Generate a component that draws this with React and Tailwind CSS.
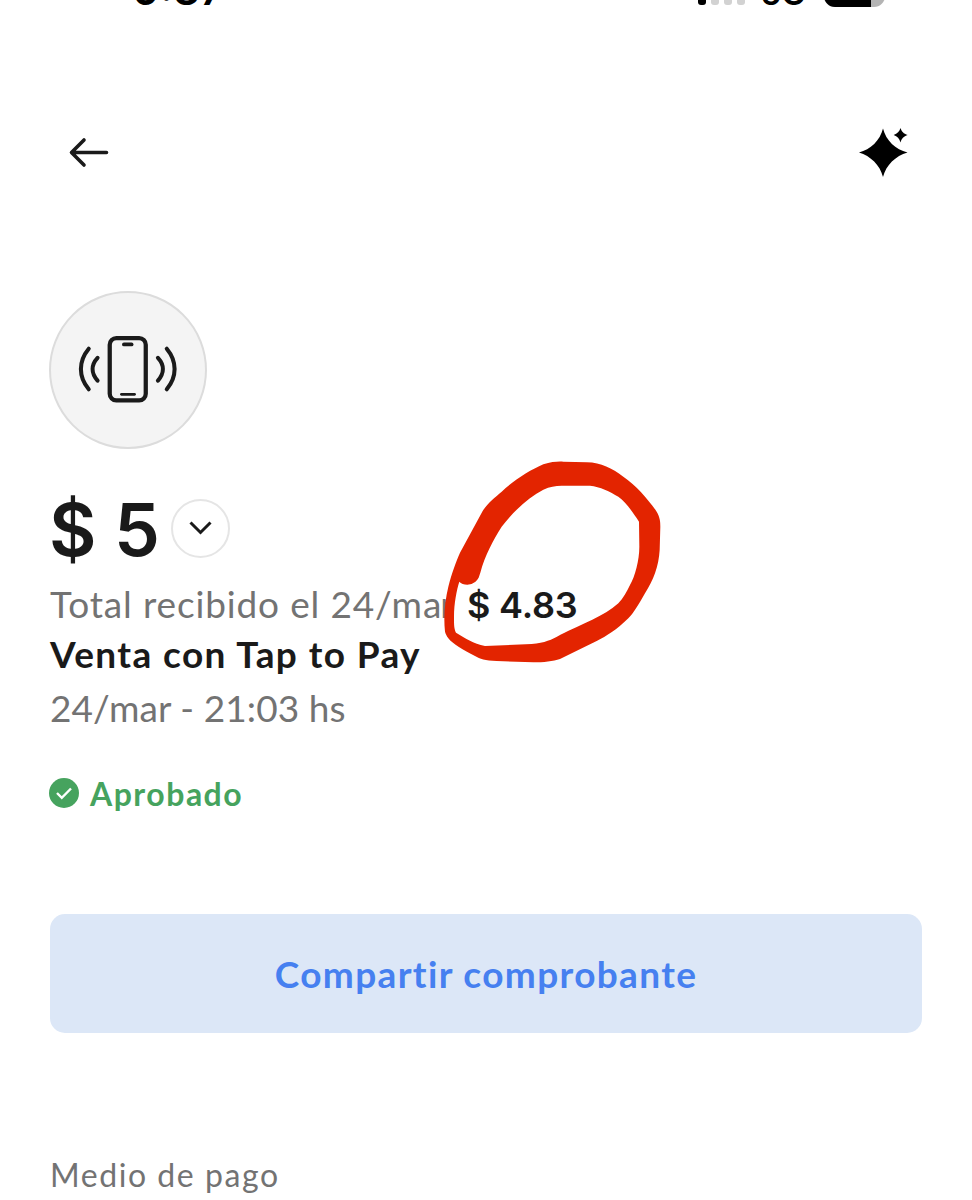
const ArrowLeftIcon = () => (
  <svg width="44" height="36" viewBox="0 0 44 36" fill="none" stroke="#1a1a1a" strokeWidth="3.6" strokeLinecap="round" strokeLinejoin="round">
    <path d="M39.5 17.5H4.5M17 5L4.5 17.5L17 30" />
  </svg>
);

const SparkleIcon = () => (
  <svg width="50" height="52" viewBox="0 0 50 52" fill="#000">
    <path d="M25 1.5C28 13.5 37.5 22.5 49.5 25.5C37.5 29 28 38 25 50C22 38 12.5 29 1 25.5C12.5 22.5 22 13.5 25 1.5Z" />
    <path d="M42.5 1C43.7 4.5 45.5 6.7 49.7 8C45.5 9.5 43.7 11.5 42.5 15.5C41.3 11.5 39.5 9.5 35.7 8C39.5 6.7 41.3 4.5 42.5 1Z" />
  </svg>
);

const TapIcon = () => (
  <svg className="mb-[2px]" width="102" height="69" viewBox="0 0 100 68" fill="none" stroke="#1a1a1a" strokeLinecap="round">
    <rect x="32" y="3" width="35.5" height="61.5" rx="6.5" strokeWidth="4.2" />
    <path d="M46 9.3H53.5" strokeWidth="3.8" />
    <path d="M43.5 58.5H56.5" strokeWidth="2.6" />
    <path d="M11.3 13.5C1 26 1 41 11.3 53.5M88.2 13.5C98.5 26 98.5 41 88.2 53.5" strokeWidth="4" />
    <path d="M20 22.5C13.5 29.5 13.5 37.5 20 45M79.5 22.5C86 29.5 86 37.5 79.5 45" strokeWidth="4" />
  </svg>
);

const StatusBar = () => (
  <div className="flex h-[11px] items-end justify-between overflow-hidden pl-[133px] pr-[87px] font-[Inter,sans-serif] text-black">
    <span className="text-[42px] leading-[42px] font-semibold">9:37</span>
    <div className="flex items-end">
      <div className="mb-[6px] flex items-end gap-[5px]">
        <span className="h-[14px] w-[8px] rounded-[3px] bg-black" />
        <span className="h-[20px] w-[8px] rounded-[3px] bg-[#d2d2d2]" />
        <span className="h-[26px] w-[8px] rounded-[3px] bg-[#d2d2d2]" />
        <span className="h-[32px] w-[8px] rounded-[3px] bg-[#d2d2d2]" />
      </div>
      <span className="mr-[18px] ml-[16px] text-[33px] leading-[36px] font-semibold">5G</span>
      <div className="mb-[4px] flex h-[30px] w-[61px] overflow-hidden rounded-[11px] bg-[#b4b4b4]">
        <span className="h-full w-[47px] bg-black" />
      </div>
    </div>
  </div>
);

// Trazo a mano alzada que rodea el monto recibido
const Scribble = () => (
  <svg className="pointer-events-none absolute top-[450px] left-[430px]" width="250" height="230" viewBox="0 0 750 690">
    <path
      fill="#e32400"
      fillRule="evenodd"
      d="M45 545C40 500 45 450 55 410C65 370 78 335 90 308L158 183C172 160 195 142 215 125C250 92 300 60 340 43C365 35 385 34 400 35L470 37C515 38 545 55 580 80C620 108 655 148 680 185C690 202 691 215 691 230L689 300C686 350 670 390 645 430C625 465 610 490 595 505C560 540 530 558 500 573L390 627C370 634 340 637 310 637L200 633C165 632 150 627 135 618C100 600 68 582 55 565C50 558 47 552 45 545ZM88 395C98 406 128 410 143 388C148 380 148 376 151 368C165 315 190 270 215 230C250 185 295 142 340 119C360 110 375 107 395 107L480 107C510 110 540 125 565 140C590 158 610 190 627 215L628 290C628 330 615 380 600 405C590 425 580 445 565 460C520 500 460 520 390 555C365 569 345 579 305 582L165 588C130 580 105 565 78 548C72 535 72 525 72 500C72 460 80 420 88 395Z"
    />
  </svg>
);

export default function App() {
  return (
    <div className="relative h-[1200px] w-[972px] overflow-hidden bg-white font-[Lato,sans-serif] text-[#1a1a1a]">
      <StatusBar />

      <header className="flex items-center justify-between pt-[116px] pr-[64px] pl-[67px]">
        <button aria-label="Volver">
          <ArrowLeftIcon />
        </button>
        <button aria-label="Asistente">
          <SparkleIcon />
        </button>
      </header>

      <main className="px-[50px] pt-[112px]">
        <div className="-ml-px flex size-[158px] items-center justify-center rounded-full border-2 border-[#dcdcdc] bg-[#f4f4f4]">
          <TapIcon />
        </div>

        <div className="mt-[39px] flex h-[80px] items-center">
          <span className="-ml-px w-[122px] pt-[3px] font-[Inter,sans-serif] text-[73px] leading-[80px] font-semibold tracking-[-0.4px] whitespace-nowrap">$ 5</span>
          <button aria-label="Ver detalle" className="flex size-[59px] items-center justify-center rounded-full border-2 border-[#e5e5e5]">
            <svg width="24" height="16" viewBox="0 0 24 16" fill="none" stroke="#1a1a1a" strokeWidth="3">
              <path d="M1.5 2.5L11.5 12.5L21.5 2.5" />
            </svg>
          </button>
        </div>

        <div className="mt-[11px] flex h-[50px] items-center text-[37px] whitespace-nowrap">
          <span className="w-[417px] tracking-[0.85px] text-[#737373]">
            Total recibido el 24/m<span className="tracking-[-1px]">a</span>r
          </span>
          <span className="pt-[2px] font-[Inter,sans-serif] text-[36px] font-semibold tracking-[-0.2px]">$ 4.83</span>
        </div>
        <h1 className="h-[50px] text-[37px] leading-[50px] font-bold tracking-[1.4px]">Venta con Tap to Pay</h1>
        <p className="mt-[4px] h-[50px] text-[37px] leading-[50px] tracking-[0.1px] text-[#737373]">24/mar - 21:03 hs</p>

        <div className="mt-[36px] -ml-px flex h-[50px] items-center gap-[11px] text-[#46a35e]">
          <svg className="mb-[2px]" width="30" height="30" viewBox="0 0 30 30" fill="none">
            <circle cx="15" cy="15" r="15" fill="#46a35e" />
            <path d="M8 15L12.8 19.8L22 10.5" stroke="#fff" strokeWidth="2.4" />
          </svg>
          <span className="text-[32px] leading-[50px] font-bold tracking-[1.5px]">Aprobado</span>
        </div>

        <button className="mt-[95px] flex h-[119px] w-full items-center justify-center rounded-[15px] bg-[#dce7f7] text-[37px] font-bold tracking-[1.35px] text-[#4680f0]">
          Compartir comprobante
        </button>

        <h2 className="mt-[117px] text-[32px] leading-[50px] tracking-[1.55px] text-[#737373]">Medio de pago</h2>
      </main>

      <Scribble />
    </div>
  );
}
